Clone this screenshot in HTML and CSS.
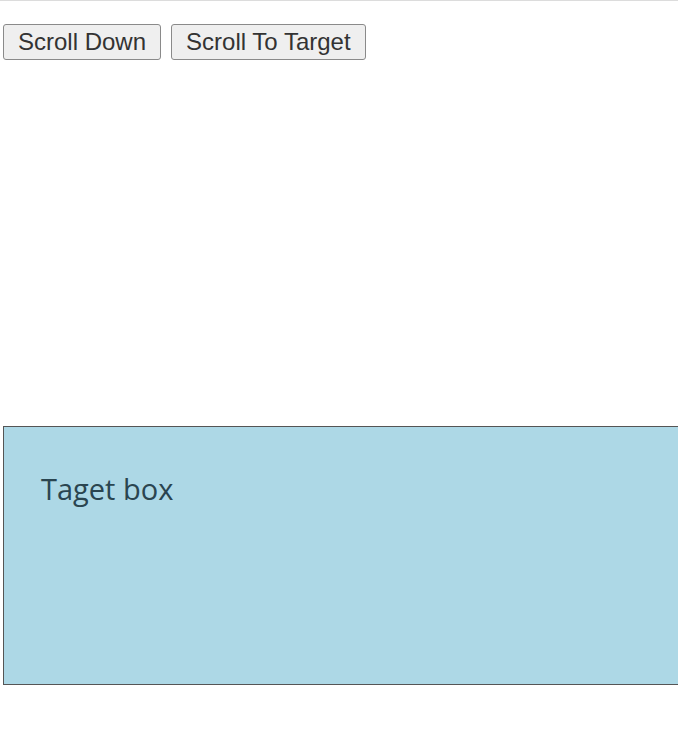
FILE: index.html
```html
<!DOCTYPE html>
<html lang="en">
<head>
  <meta charset="UTF-8" />
  <title>Scroll To Target</title>
  <link rel="stylesheet" href="styles.css">
</head>
<body>
  <div class="toolbar">
    <button class="btn" onclick="window.scrollBy(0, 100)">Scroll Down</button>
    <button class="btn" onclick="document.getElementById('target').scrollIntoView()">Scroll To Target</button>
  </div>

  <div id="target" class="target-box">Taget box</div>
</body>
</html>
```

FILE: styles.css
```css
body {
  margin: 0;
  border-top: 1px solid #dcdcdc;
  font-family: "Open Sans", sans-serif;
  background: white;
}
.toolbar {
  display: flex;
  gap: 10px;
  padding: 23px 0 0 3px;
}
.btn {
  font-family: "Liberation Sans", Arial, sans-serif;
  font-size: 24px;
  color: #333;
  background: #efefef;
  border: 1px solid #8a8a8a;
  border-radius: 3px;
  padding: 3px 14px;
  height: 36px;
  line-height: 28px;
}
.target-box {
  margin: 366px 0 0 3px;
  height: 259px;
  box-sizing: border-box;
  background: #add8e6;
  border: 1px solid #555;
  border-right: none;
  padding: 42px 37px;
  font-size: 29px;
  color: #2a4550;
}
```
